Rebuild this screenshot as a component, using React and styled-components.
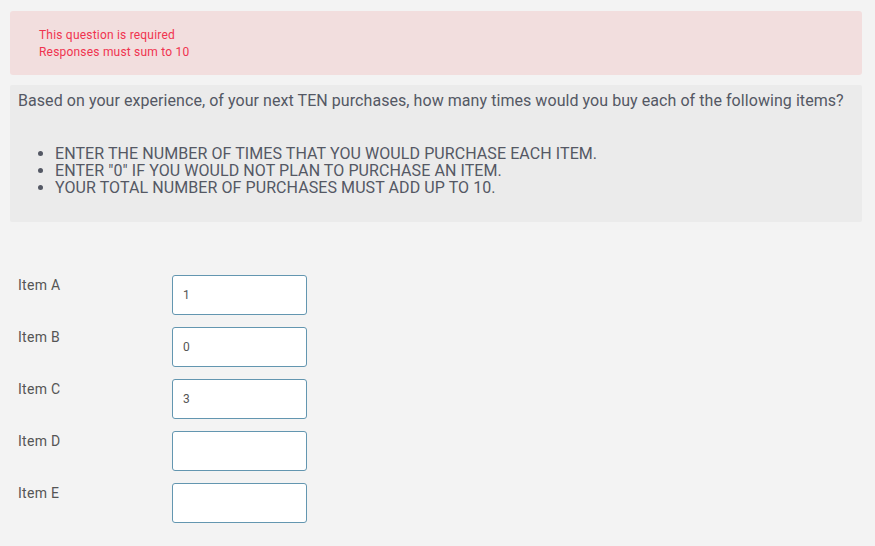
import React from 'react';
import styled, { createGlobalStyle } from 'styled-components';

const GlobalStyle = createGlobalStyle`
  body {
    margin: 0;
    background: #f3f3f3;
    font-family: Roboto, "Liberation Sans", sans-serif;
  }
`;

const Page = styled.div`
  padding: 11px 13px 0 10px;
`;

const ErrorBox = styled.div`
  background: #f2dede;
  border-radius: 3px;
  padding: 16px 29px 14px;
  color: #f0334f;
  font-size: 12px;
  line-height: 17px;
  letter-spacing: 0.2px;
`;

const QuestionBox = styled.div`
  margin-top: 10px;
  background: #ebebeb;
  border-radius: 2px;
  padding: 5px 8px 26px;
  color: #545864;
`;

const QuestionText = styled.p`
  margin: 0;
  font-size: 16px;
  line-height: 22px;
  letter-spacing: 0.06px;
`;

const Rules = styled.ul`
  margin: 33px 0 0;
  padding-left: 37px;
  font-size: 16px;
  line-height: 17px;
  text-transform: uppercase;
  letter-spacing: 0.08px;
`;

const Items = styled.div`
  margin-top: 53px;
  display: flex;
  flex-direction: column;
  gap: 12px;
`;

const Row = styled.div`
  display: flex;
  align-items: flex-start;
`;

const Label = styled.label`
  width: 154px;
  padding: 2px 0 0 8px;
  font-size: 14px;
  line-height: 16px;
  letter-spacing: 0.3px;
  color: #555;
`;

const Input = styled.input`
  box-sizing: border-box;
  width: 135px;
  height: 40px;
  border: 1px solid #6396b0;
  border-radius: 3px;
  background: #fff;
  padding: 0 10px;
  font-family: Roboto, "Liberation Sans", sans-serif;
  font-size: 12px;
  color: #555;
  outline: none;
`;

const items = [
  { label: 'Item A', value: '1' },
  { label: 'Item B', value: '0' },
  { label: 'Item C', value: '3' },
  { label: 'Item D', value: '' },
  { label: 'Item E', value: '' },
];

export default function App() {
  return (
    <>
      <GlobalStyle />
      <Page>
        <ErrorBox>
          <div>This question is required</div>
          <div>Responses must sum to 10</div>
        </ErrorBox>
        <QuestionBox>
          <QuestionText>
            Based on your experience, of your next TEN purchases, how many times would you buy each of the following items?
          </QuestionText>
          <Rules>
            <li>Enter the number of times that you would purchase each item.</li>
            <li>Enter "0" if you would not plan to purchase an item.</li>
            <li>Your total number of purchases must add up to 10.</li>
          </Rules>
        </QuestionBox>
        <Items>
          {items.map((it) => (
            <Row key={it.label}>
              <Label>{it.label}</Label>
              <Input defaultValue={it.value} />
            </Row>
          ))}
        </Items>
      </Page>
    </>
  );
}
